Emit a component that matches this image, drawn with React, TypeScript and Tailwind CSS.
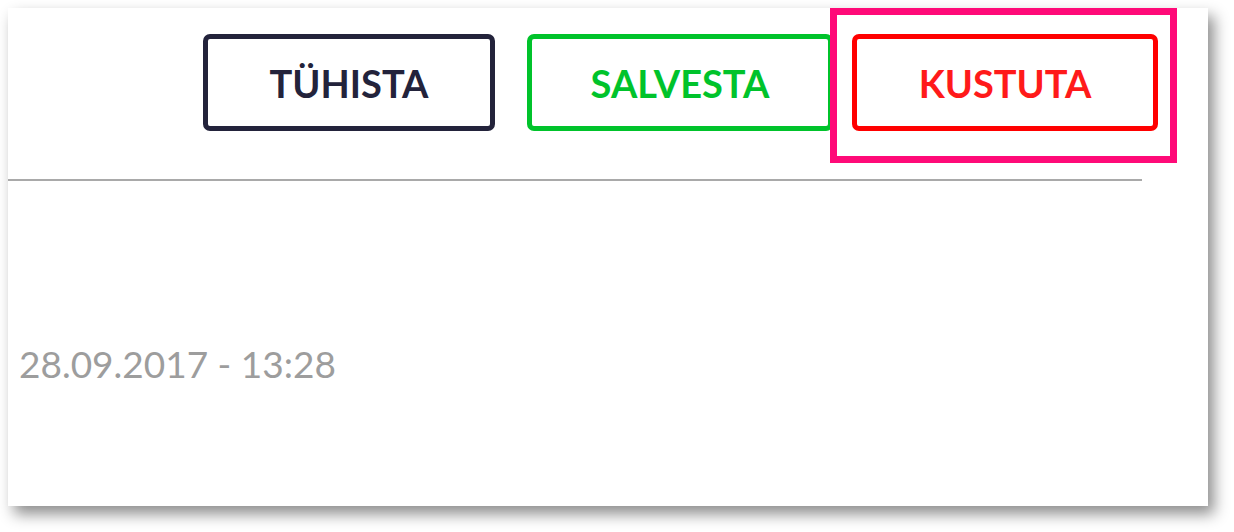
export default function App() {
  return (
    <main className="min-h-screen bg-white p-2 font-['Lato',sans-serif]">
      <section className="relative w-[1200px] h-[498px] bg-white shadow-[6px_8px_14px_rgba(0,0,0,0.45)]">
        <div className="flex justify-end pt-[26px] pr-[50px]">
          <button className="w-[292px] h-[97px] flex items-center justify-center border-[5px] border-[#23233b] rounded-[7px] text-[38px] font-bold text-[#23233b] leading-none">
            TÜHISTA
          </button>
          <button className="ml-[32px] w-[306px] h-[97px] flex items-center justify-center border-[5px] border-[#00c32b] rounded-[7px] text-[38px] font-bold text-[#00c32b] leading-none">
            SALVESTA
          </button>
          <button className="ml-[19px] w-[306px] h-[97px] flex items-center justify-center border-[5px] border-[#ff0000] rounded-[7px] text-[38px] font-bold text-[#ff1a1a] leading-none">
            KUSTUTA
          </button>
        </div>
        <div className="mt-[48px] h-[2px] w-[1134px] bg-[#a9a9a9]" />
        <div className="mt-[165px] pl-[11px] text-[37px] leading-[36px] text-[#9d9d9d]">
          28.09.2017 - 13:28
        </div>
        <div className="absolute left-[822px] top-0 w-[347px] h-[155px] border-[7px] border-[#ff0a78]" />
      </section>
    </main>
  );
}
